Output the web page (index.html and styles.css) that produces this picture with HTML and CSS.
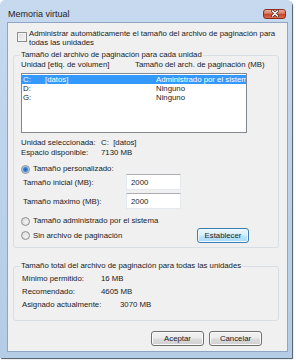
FILE: index.html
```html
<html>
<head>
<meta charset="utf-8">
<link rel="stylesheet" href="styles.css">
</head>
<body>

<div class="window">
	<div class="titlebar">
		<span class="title">Memoria virtual</span>
		<span class="close-btn">
			<svg width="10" height="7" viewBox="0 0 10 7"><path d="M2.5 1 L7.5 6 M7.5 1 L2.5 6" stroke="#3a1a14" stroke-width="2.6" stroke-linecap="round"/><path d="M2.5 1 L7.5 6 M7.5 1 L2.5 6" stroke="#fff" stroke-width="1.5" stroke-linecap="round"/></svg>
		</span>
	</div>

	<div class="client">
		<div class="auto-row">
			<span class="checkbox"></span>
			<span class="auto-text">Administrar automáticamente el tamaño del archivo de paginación para<br>todas las unidades</span>
		</div>

		<fieldset class="group group-drives">
			<legend>Tamaño del archivo de paginación para cada unidad</legend>
			<div class="list-header">
				<span class="col-drive">Unidad [etiq. de volumen]</span>
				<span>Tamaño del arch. de paginación (MB)</span>
			</div>
			<div class="listbox">
				<div class="list-row selected"><span class="col-letter">C:</span><span class="col-label">[datos]</span><span class="col-size">Administrado por el sistema</span></div>
				<div class="list-row"><span class="col-letter">D:</span><span class="col-label"></span><span class="col-size">Ninguno</span></div>
				<div class="list-row"><span class="col-letter">G:</span><span class="col-label"></span><span class="col-size">Ninguno</span></div>
			</div>

			<div class="info">
				<div class="info-row"><span class="info-label">Unidad seleccionada:</span><span>C:&nbsp; [datos]</span></div>
				<div class="info-row"><span class="info-label">Espacio disponible:</span><span>7130 MB</span></div>
			</div>

			<div class="radio-row first"><span class="radio checked"></span>Tamaño personalizado:</div>
			<div class="size-row"><span class="size-label">Tamaño inicial (MB):</span><input class="size-input" type="text" value="2000"></div>
			<div class="size-row"><span class="size-label">Tamaño máximo (MB):</span><input class="size-input" type="text" value="2000"></div>
			<div class="radio-row second"><span class="radio"></span>Tamaño administrado por el sistema</div>
			<div class="last-row">
				<div class="radio-row"><span class="radio"></span>Sin archivo de paginación</div>
				<button class="btn btn-default">Establecer</button>
			</div>
		</fieldset>

		<fieldset class="group group-totals">
			<legend>Tamaño total del archivo de paginación para todas las unidades</legend>
			<div class="total-row first"><span class="total-label">Mínimo permitido:</span><span>16 MB</span></div>
			<div class="total-row"><span class="total-label">Recomendado:</span><span>4605 MB</span></div>
			<div class="total-row"><span class="total-label wide">Asignado actualmente:</span><span>3070 MB</span></div>
		</fieldset>

		<div class="actions">
			<button class="btn">Aceptar</button>
			<button class="btn">Cancelar</button>
		</div>
	</div>
</div>

</body>
</html>
```

FILE: styles.css
```css
body {
	margin: 0;
	background: #fff;
	font-family: "Liberation Sans", Arial, sans-serif;
	font-size: 7.8px;
	color: #1b1b1b;
}

.window {
	width: 292px;
	height: 358px;
	box-sizing: border-box;
	padding: 0 4px 6px 7px;
	background: linear-gradient(180deg, #c6d9ef 0%, #bdd3eb 45%, #b4cce6 100%);
	border-radius: 5px 5px 0 0;
	box-shadow: 1px 1px 1px #4a5868;
}

.titlebar {
	height: 22px;
	box-sizing: border-box;
	padding: 5px 2px 0 1px;
	display: flex;
	align-items: center;
	justify-content: space-between;
}
.title {
	font-size: 9px;
	line-height: 14px;
	color: #1e1e1e;
}
.close-btn {
	width: 23px;
	height: 10px;
	box-sizing: border-box;
	display: flex;
	align-items: center;
	justify-content: center;
	border: 1px solid #8f2e1c;
	border-radius: 3px;
	background: linear-gradient(180deg, #eab0a0 0%, #d9735c 45%, #c7442a 55%, #d46d52 100%);
}

.client {
	height: 330px;
	box-sizing: border-box;
	background: #f0f0f0;
	border: 1px solid #8ea6c2;
}

.auto-row {
	display: flex;
	gap: 2px;
	margin: 6px 0 0 9px;
	line-height: 9px;
}
.checkbox {
	flex: none;
	width: 10px;
	height: 10px;
	box-sizing: border-box;
	margin-top: 3px;
	border: 1px solid #8e8f8f;
	background: linear-gradient(135deg, #dcdcdc, #f6f6f6);
	box-shadow: inset 0 0 0 1px #f4f4f4;
}

.group {
	margin: 3px 0 0 5px;
	width: 266px;
	box-sizing: border-box;
	border: 1px solid #d5dfe5;
	border-radius: 3px;
	min-width: 0;
}
.group legend {
	padding: 0 1px;
	line-height: 10px;
}
.group-drives {
	padding: 0 29px 4px 7px;
}
.group-drives legend {
	margin-left: -1px;
}

.list-header {
	display: flex;
	line-height: 10px;
	white-space: nowrap;
}
.col-drive {
	width: 114px;
	flex: none;
}

.listbox {
	margin-top: 3px;
	width: 226px;
	height: 60px;
	box-sizing: border-box;
	border: 1px solid #828790;
	background: #fff;
	padding-top: 1px;
}
.list-row {
	display: flex;
	line-height: 9px;
	padding-left: 1px;
	white-space: nowrap;
}
.list-row.selected {
	background: #3399ff;
	color: #fff;
}
.col-letter {
	width: 22px;
	flex: none;
}
.col-label {
	width: 111px;
	flex: none;
}
.col-size {
	flex: 1;
	overflow: hidden;
}

.info {
	margin-top: 5px;
}
.info-row {
	display: flex;
	line-height: 10px;
}
.info-label {
	width: 80px;
}

.radio-row {
	display: flex;
	align-items: center;
	line-height: 10px;
}
.radio-row.first {
	margin-top: 6px;
}
.radio-row.second {
	margin-top: 7px;
}
.radio {
	width: 9px;
	height: 9px;
	box-sizing: border-box;
	margin-right: 3px;
	border: 1px solid #8e8f8f;
	border-radius: 50%;
	background: radial-gradient(circle at 60% 60%, #f4f4f4, #d4d4d4);
}
.radio.checked {
	background: radial-gradient(circle, #1f5ba8 0, #3f86d8 2px, #9ec3ea 3px, #eef3f8 4px);
}

.size-row {
	display: flex;
	align-items: center;
	padding-left: 2px;
}
.size-row + .size-row {
	margin-top: 3px;
}
.size-label {
	width: 103px;
}
.size-input {
	width: 55px;
	height: 16px;
	box-sizing: border-box;
	margin: 0;
	padding: 0 0 0 4px;
	font: inherit;
	color: #1b1b1b;
	background: #fff;
	border: 1px solid #e3e9ef;
	border-top-color: #abadb3;
	border-radius: 0;
	outline: none;
}

.last-row {
	margin-top: 2px;
	display: flex;
	align-items: center;
	justify-content: space-between;
}

.btn {
	width: 53px;
	height: 15px;
	box-sizing: border-box;
	margin: 0;
	padding: 0;
	font: inherit;
	color: #1b1b1b;
	border: 1px solid #707070;
	border-radius: 3px;
	background: linear-gradient(180deg, #f2f2f2 0%, #ebebeb 48%, #dddddd 52%, #cfcfcf 100%);
	box-shadow: inset 0 0 0 1px #fbfbfb;
}
.btn-default {
	width: 52px;
	border-color: #3c7fb1;
	background: linear-gradient(180deg, #eaf6fd 0%, #d9f0fc 48%, #bee6fd 52%, #a7d9f5 100%);
	box-shadow: inset 0 0 0 1px #f0f9ff;
}

.group-totals {
	margin-top: 13px;
	padding: 0 0 9px 8px;
}
.group-totals legend {
	margin-left: -2px;
}
.total-row {
	display: flex;
	line-height: 13px;
}
.total-row.first {
	margin-top: 1px;
}
.total-label {
	width: 79px;
}
.total-label.wide {
	width: 98px;
}

.actions {
	margin-top: 10px;
	display: flex;
	justify-content: flex-end;
	gap: 5px;
	padding-right: 25px;
}
```
